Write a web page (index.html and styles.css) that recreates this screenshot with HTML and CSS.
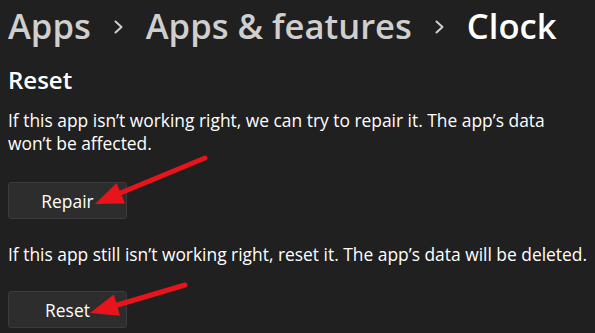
FILE: index.html
```html
<!DOCTYPE html>
<html>
<head>
<meta charset="utf-8">
<link rel="stylesheet" href="styles.css">
</head>
<body>
<div class="page">
  <nav class="crumbs">
    <span class="crumb">Apps</span>
    <svg class="chev" width="9" height="14" viewBox="0 0 9 14"><polyline points="1.5,1.5 7.5,7 1.5,12.5" fill="none" stroke="#d0d0d0" stroke-width="2" stroke-linecap="round" stroke-linejoin="round"/></svg>
    <span class="crumb">Apps &amp; features</span>
    <svg class="chev" width="9" height="14" viewBox="0 0 9 14"><polyline points="1.5,1.5 7.5,7 1.5,12.5" fill="none" stroke="#d0d0d0" stroke-width="2" stroke-linecap="round" stroke-linejoin="round"/></svg>
    <span class="crumb current">Clock</span>
  </nav>
  <h2 class="section-title">Reset</h2>
  <p class="desc">If this app isn’t working right, we can try to repair it. The app’s data won’t be affected.</p>
  <button class="btn">Repair</button>
  <p class="desc desc-2">If this app still isn’t working right, reset it. The app’s data will be deleted.</p>
  <button class="btn btn-2">Reset</button>
</div>
<svg class="arrows" width="595" height="333" viewBox="0 0 595 333">
  <line x1="205" y1="158" x2="118" y2="194" stroke="#e8141b" stroke-width="5" stroke-linecap="round"/>
  <polygon points="95,204 116.6,183 125.1,203.4" fill="#e8141b"/>
  <line x1="185" y1="285" x2="114" y2="306" stroke="#e8141b" stroke-width="5" stroke-linecap="round"/>
  <polygon points="90,313 113.8,294.5 120,315.7" fill="#e8141b"/>
</svg>
</body>
</html>
```

FILE: styles.css
```css
html, body {
  margin: 0;
  padding: 0;
  background: #202020;
}
body {
  width: 595px;
  height: 333px;
  overflow: hidden;
  position: relative;
  font-family: "Open Sans", "Noto Sans", sans-serif;
  color: #ffffff;
}
.page {
  padding: 0 0 0 8px;
  display: flex;
  flex-direction: column;
  align-items: flex-start;
}
.crumbs {
  display: flex;
  align-items: center;
  height: 52px;
  font-size: 34.6px;
  line-height: 52px;
  font-weight: 600;
}
.crumb {
  color: #cfcfcf;
}
.crumb.current {
  color: #ffffff;
}
.chev {
  margin: 0 23px;
  position: relative;
  top: 1px;
}
.section-title {
  margin: 13px 0 0 0;
  font-size: 24px;
  line-height: 30px;
  font-weight: 600;
}
.desc {
  margin: 14px 0 0 0;
  font-size: 17.4px;
  line-height: 23px;
  width: 565px;
}
.desc-2 {
  margin-top: 24px;
  width: auto;
  white-space: nowrap;
}
.btn {
  margin-top: 27px;
  width: 119px;
  height: 37px;
  background: #2d2d2d;
  border: 1px solid #3b3b3b;
  border-radius: 3px;
  color: #ffffff;
  font-family: "Open Sans", "Noto Sans", sans-serif;
  font-size: 17.4px;
  padding: 0;
}
.btn-2 {
  margin-top: 25px;
}
.arrows {
  position: absolute;
  left: 0;
  top: 0;
  pointer-events: none;
}
```
